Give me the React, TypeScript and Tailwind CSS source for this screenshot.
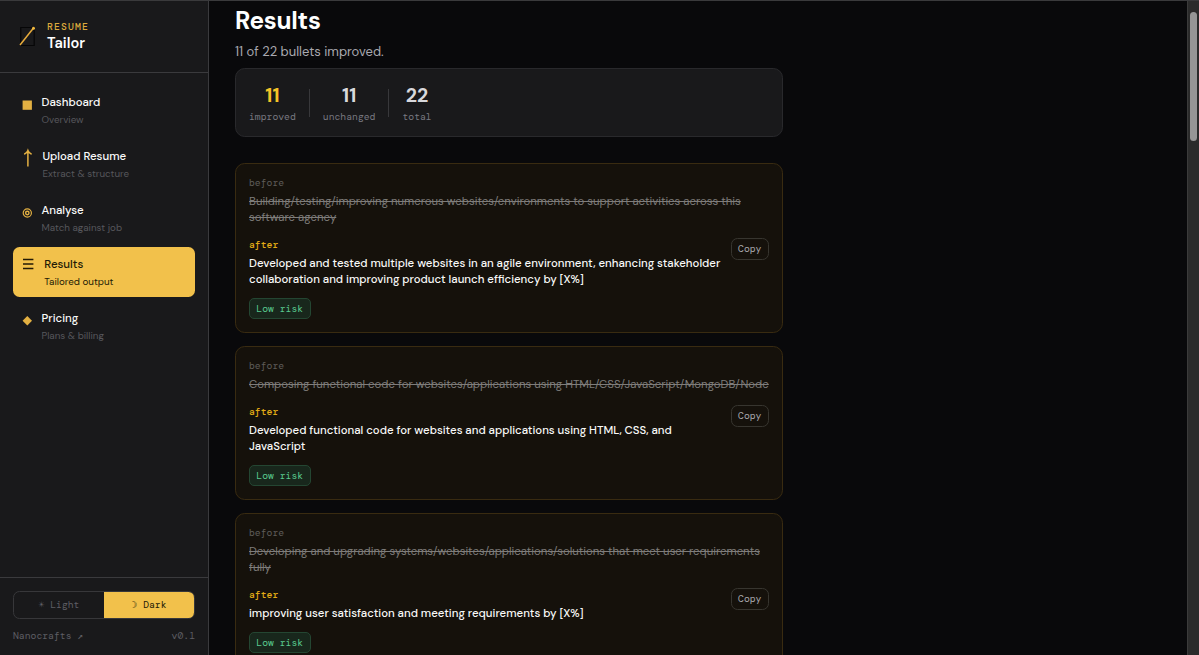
import React from 'react';

const sans = "font-['DM_Sans',Inter,sans-serif]";
const mono = "font-['DM_Mono','DejaVu_Sans_Mono',monospace]";

type NavItem = {
  title: string;
  subtitle: string;
  icon: React.ReactNode;
  offset: string;
  active?: boolean;
};

const navItems: NavItem[] = [
  {
    title: 'Dashboard',
    subtitle: 'Overview',
    offset: 'pl-[28.5px]',
    icon: <rect x="0.6" y="8.5" width="9.3" height="9.3" />,
  },
  {
    title: 'Upload Resume',
    subtitle: 'Extract & structure',
    offset: 'pl-[29.4px]',
    icon: <path d="M5.9 20.6V4.8M2.2 8.2Q4.9 7 5.9 4.4Q6.9 7 9.6 8.2" fill="none" stroke="currentColor" strokeWidth="1.5" />,
  },
  {
    title: 'Analyse',
    subtitle: 'Match against job',
    offset: 'pl-[28.5px]',
    icon: (
      <g fill="none" stroke="currentColor">
        <circle cx="5.3" cy="13" r="4.1" strokeWidth="1.2" />
        <circle cx="5.3" cy="13" r="1.7" strokeWidth="1.4" />
      </g>
    ),
  },
  {
    title: 'Results',
    subtitle: 'Tailored output',
    active: true,
    offset: 'pl-[31.3px]',
    icon: <path d="M1 5.5H11.4M1 10H11.4M1 14.5H11.4" fill="none" stroke="currentColor" strokeWidth="1.6" />,
  },
  {
    title: 'Pricing',
    subtitle: 'Plans & billing',
    offset: 'pl-[28.5px]',
    icon: <path d="M5.3 8L10 12.7L5.3 17.4L0.6 12.7Z" />,
  },
];

const bullets: { before: string[]; after: string[] }[] = [
  {
    before: [
      'Building/testing/improving numerous websites/environments to support activities across this',
      'software agency',
    ],
    after: [
      'Developed and tested multiple websites in an agile environment, enhancing stakeholder',
      'collaboration and improving product launch efficiency by [X%]',
    ],
  },
  {
    before: ['Composing functional code for websites/applications using HTML/CSS/JavaScript/MongoDB/Node'],
    after: ['Developed functional code for websites and applications using HTML, CSS, and', 'JavaScript'],
  },
  {
    before: [
      'Developing and upgrading systems/websites/applications/solutions that meet user requirements',
      'fully',
    ],
    after: ['improving user satisfaction and meeting requirements by [X%]'],
  },
];

function Logo() {
  return (
    <svg className="h-[22px] w-[17px] shrink-0" viewBox="0 0 17 22">
      <path d="M1.8 2.5H15.2V20.5H1.8Z" fill="none" stroke="#060607" strokeWidth="1.2" />
      <path d="M1 20L14.5 3" stroke="#e8ac3c" strokeWidth="1.5" />
      <circle cx="14.5" cy="3.2" r="1.5" fill="#f2b93f" />
    </svg>
  );
}

function Sidebar() {
  return (
    <aside className="flex w-[209px] shrink-0 flex-col border-r border-[#3a3a3d] bg-[#19191b]">
      <div className="flex h-[72px] items-center gap-[11px] border-b border-[#3a3a3d] pb-px pl-[19px]">
        <Logo />
        <div>
          <div className={`${mono} h-[14px] text-[9.75px] leading-[14px] font-medium tracking-[1.17px] text-[#dba93c]`}>RESUME</div>
          <div className="h-[18px] text-[14.6px] leading-[19px] font-semibold tracking-[0.05px] text-white">Tailor</div>
        </div>
      </div>
      <nav className="flex flex-1 flex-col gap-1 px-[13px] pt-[12px]">
        {navItems.map((item) => (
          <a
            key={item.title}
            className={`relative block h-[50px] rounded-[6.5px] pt-[10px] ${item.offset} ${item.active ? 'bg-[#f2c14b] text-[#231a06]' : 'text-[#e3b042]'}`}
          >
            <svg className="absolute top-[7px] left-[9px] h-[21px] w-3" viewBox="0 0 12 21" fill="currentColor">
              {item.icon}
            </svg>
            <div className={`h-4 text-[11.45px] leading-4 font-medium whitespace-nowrap ${item.active ? '' : 'text-[#fafafa]'}`}>
              {item.title}
            </div>
            <div className={`text-[9.8px] leading-[17px] whitespace-nowrap ${item.active ? '' : 'text-[#57575c]'}`}>
              {item.subtitle}
            </div>
          </a>
        ))}
      </nav>
      <div className={`${mono} h-[78px] border-t border-[#3a3a3d] px-[13px] pt-[13px] text-[9.75px] text-[#5e5e64]`}>
        <div className="flex h-7 overflow-hidden rounded-[6.5px] border border-[#37373a]">
          <button className="flex-1 pt-px">☀ Light</button>
          <button className="flex-1 bg-[#f2c14b] pt-px text-[#231a06]">☽ Dark</button>
        </div>
        <div className="mt-[8.5px] flex justify-between leading-[15px]">
          <span>Nanocrafts ↗</span>
          <span>v0.1</span>
        </div>
      </div>
    </aside>
  );
}

function Stat({ value, label, className }: { value: number; label: string; className: string }) {
  return (
    <div className="text-center">
      <div className={`h-[28px] text-[19.5px] leading-[30px] font-bold ${className}`}>{value}</div>
      <div className={`${mono} h-[14px] text-[9.75px] leading-[15px] text-[#787880]`}>{label}</div>
    </div>
  );
}

function BulletCard({ before, after }: { before: string[]; after: string[] }) {
  return (
    <article className="rounded-[9.75px] border border-[#392b11] bg-[#15110b] px-[13px] pt-[11px] pb-[13px]">
      <div className={`${mono} mb-[3px] text-[9.75px] leading-4 text-[#5e5c59]`}>before</div>
      <div className="text-[11.42px] leading-4 text-[#7e7c7a]">
        {before.map((line) => (
          <div key={line} className="whitespace-nowrap line-through">{line}</div>
        ))}
      </div>
      <div className="mt-[11px] flex items-start justify-between">
        <div className="w-0 flex-1">
          <div className={`${mono} mb-[3px] text-[9.75px] leading-4 font-medium text-[#e2ac16]`}>after</div>
          <div className="text-[11.42px] leading-4 font-medium text-[#f8f8f7]">
            {after.map((line) => (
              <div key={line} className="whitespace-nowrap">{line}</div>
            ))}
          </div>
        </div>
        <button className={`${mono} mt-[1px] h-[22px] w-[38.5px] rounded-[6.5px] border border-[#37352f] text-[9.75px] leading-[20px] text-[#a9a9ae]`}>Copy</button>
      </div>
      <div className={`${mono} mt-[10px] h-[21px] w-[61.5px] rounded-[5px] border border-[#244632] bg-[#18271c] text-center text-[9.75px] leading-[19px] text-[#5acb8f]`}>
        Low risk
      </div>
    </article>
  );
}

export default function App() {
  return (
    <div className={`${sans} flex h-[655px] w-[1199px] overflow-hidden border-t border-[#3a3a3c] bg-[#09090b] text-white`}>
      <Sidebar />
      <main className="min-w-0 flex-1 pl-[26px]">
        <div className="w-[548px]">
          <h1 className="pt-[4px] text-[24.4px] leading-8 font-bold tracking-[-0.25px]">Results</h1>
          <p className="mt-[5px] text-[13px] leading-5 text-[#a9a9b0]">11 of 22 bullets improved.</p>
          <section className="mt-[6px] flex h-[69px] rounded-[9.75px] border border-[#29292c] bg-[#19191b] px-[13px] pt-[12px]">
            <Stat value={11} label="improved" className="text-[#f4c328]" />
            <div className="mx-[13px] mt-[8px] h-[28px] w-px bg-[#38383b]" />
            <Stat value={11} label="unchanged" className="text-[#d8d8dc]" />
            <div className="mx-[13px] mt-[8px] h-[28px] w-px bg-[#38383b]" />
            <Stat value={22} label="total" className="text-[#d8d8dc]" />
          </section>
          <div className="mt-[26px] flex flex-col gap-[13px]">
            {bullets.map((bullet) => (
              <BulletCard key={bullet.before[0]} {...bullet} />
            ))}
          </div>
        </div>
      </main>
      <div className="w-[12px] border-l border-[#3b3b3b] bg-[#2b2b2b] pt-[11px] pl-[2px]">
        <div className="h-[129px] w-[7px] rounded-full bg-[#969696]" />
      </div>
    </div>
  );
}
